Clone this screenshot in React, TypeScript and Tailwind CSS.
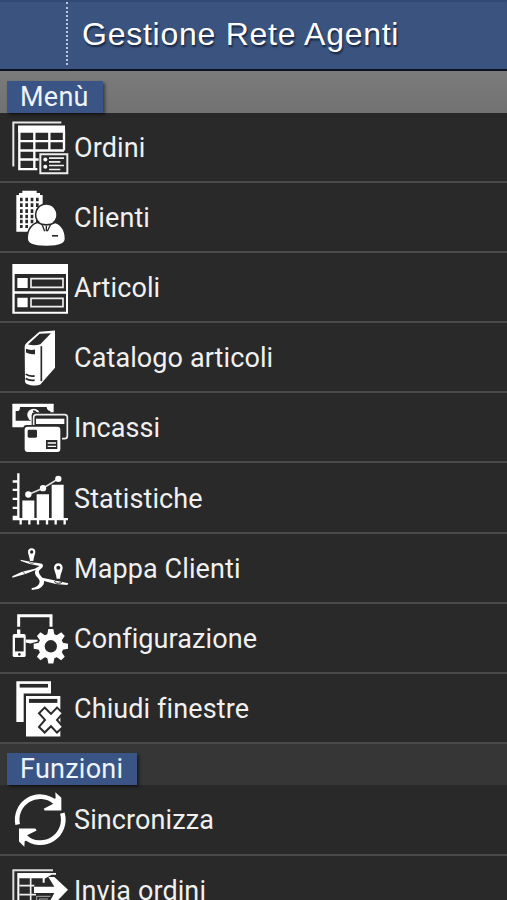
import type { ReactNode } from "react";

const DARK = "#292929";

function Icon({ top, children }: { top: number; children: ReactNode }) {
  return (
    <svg className="h-[68px] w-[74px] shrink-0" viewBox={`0 ${top} 222 204`} fill="#fff" aria-hidden="true">
      {children}
    </svg>
  );
}

const OrdersIcon = () => (
  <Icon top={7.5}>
    <path d="M40 168V36H184" fill="none" stroke="#e8e8e8" strokeWidth="6" />
    <path d="M54 45H195V67H54z" />
    <path d="M58 60V176H112M192 60V120M103 60V176M148 60V120M58 92H192M58 120H192M58 147H118" fill="none" stroke="#fff" strokeWidth="7" />
    <path d="M116 125H207V192H116z" fill={DARK} />
    <path d="M121 131H202V188H121z" fill="none" stroke="#eee" strokeWidth="6" />
    <circle cx="136" cy="147" r="6" />
    <circle cx="136" cy="169" r="6" />
    <path d="M147 143H192M147 154H181M147 165H192M147 177H181" stroke="#eee" strokeWidth="5" />
  </Icon>
);

const ClientsIcon = () => (
  <Icon top={8.1}>
    <path d="M49 154V44H57V38H67V31H110V38H120V44H128V154z" />
    {[52, 69, 87, 103, 118].map((y) => (
      <path key={y} d={`M60 ${y}h8v11h-8zM76 ${y}h8v11h-8zM92 ${y}h8v11h-8zM108 ${y}h8v11h-8z`} fill={DARK} />
    ))}
    <path d="M60 134h8v9h-8zM76 134h8v9h-8z" fill={DARK} />
    <path
      d="M139 73a30 30 0 0 1 19 53c22 6 36 21 36 49 0 12-13 21-55 21s-55-9-55-21c0-28 14-43 36-49a30 30 0 0 1 19-53z"
      stroke={DARK}
      strokeWidth="9"
      paintOrder="stroke"
    />
    <path d="M112 126Q139 142 166 126" fill="none" stroke={DARK} strokeWidth="5" />
    <path d="M126 132L134 153M152 132L142 153M139 137V153" stroke={DARK} strokeWidth="4" />
    <path d="M156 164H174V169H156z" fill={DARK} />
  </Icon>
);

const ArticlesIcon = () => (
  <Icon top={0}>
    <path d="M37 33H204V182H37z" />
    <path d="M44 63H198V115H44zM44 122H198V176H44z" fill={DARK} />
    <path d="M52 75H83V105H52zM52 134H83V163H52z" />
    <path d="M93 77H189V103H93zM93 136H189V161H93z" fill="none" stroke="#eee" strokeWidth="5" />
  </Icon>
);

const CatalogIcon = () => (
  <Icon top={212.5}>
    <path d="M74 283Q75 276 81 271L118 239L165 235V347L121 397Q111 402 92 399Q77 397 75 389z" />
    <path d="M84 277L119 245L153 243L121 276Q106 282 84 277z" fill={DARK} />
    <path d="M124 282V387" stroke={DARK} strokeWidth="5" />
    <path d="M78 290Q90 295 105 292V306Q90 308 78 301z" fill={DARK} />
    <path d="M77 366Q88 374 104 371M77 379Q89 387 104 384" fill="none" stroke={DARK} strokeWidth="5" />
  </Icon>
);

const ReceiptsIcon = () => (
  <Icon top={-2.1}>
    <rect x="37" y="30" width="124" height="71" rx="2" />
    <path d="M60 40H140Q141 51 151 52V81H47V77H54V52Q60 51 60 40zM47 52H54V78H47z" fill={DARK} />
    <circle cx="101" cy="64" r="19" />
    <path d="M99 52Q113 53 111 69" fill="none" stroke={DARK} strokeWidth="5" />
    <rect x="95" y="56" width="113" height="84" rx="9" fill={DARK} />
    <rect x="101" y="63" width="101" height="72" rx="8" fill="none" stroke="#eee" strokeWidth="5" />
    <path d="M108 75H193V91H108z" />
    <rect x="70" y="94" width="116" height="85" rx="10" fill={DARK} />
    <rect x="74" y="99" width="107" height="76" rx="9" />
    <rect x="83" y="108" width="28" height="24" rx="4" fill={DARK} />
    <path d="M138 139H172V166H138z" fill={DARK} />
    <path d="M143 148H168M143 158H168" stroke="#fff" strokeWidth="4" />
  </Icon>
);

const StatsIcon = () => (
  <Icon top={208.5}>
    <path
      d="M55 236V374M38 261H55M38 286H55M38 313H55M38 340H55M38 367H55M38 374H204M62 374V390M88 374V390M114 374V390M141 374V390M167 374V390M194 374V390"
      fill="none"
      stroke="#fff"
      strokeWidth="7"
    />
    <path d="M67 318H103V372H67zM110 299H147V372H110zM155 271H191V372H155z" />
    <path d="M85 300L129 281L175 253" fill="none" stroke="#ddd" strokeWidth="5" />
    <circle cx="85" cy="300" r="9.500" />
    <circle cx="129" cy="281" r="9.500" />
    <circle cx="175" cy="253" r="9.500" />
  </Icon>
);

const MapIcon = () => (
  <Icon top={-0.9}>
    <path d="M95 42a11 11 0 0 1 11 11c0 7-5 15-6 27h-10c-1-12-6-20-6-27a11 11 0 0 1 11-11z" />
    <circle cx="95" cy="53" r="5" fill={DARK} />
    <path d="M175 87a13 13 0 0 1 13 13c0 9-7 18-8 33h-10c-1-15-8-24-8-33a13 13 0 0 1 13-13z" />
    <circle cx="175" cy="100" r="6" fill={DARK} />
    <path d="M61 76L91 82L126 88Q131 92 128 98L117 109Q114 116 127 130L205 147L202 152L167 149L132 140Q135 154 115 164L95 167V162Q118 156 119 142Q119 136 109 126Q102 116 107 107L78 118L37 130V126L66 112L104 103L119 95L89 89L63 80z" />
    <ellipse cx="175" cy="142" rx="11" ry="5" fill="none" stroke={DARK} strokeWidth="3" />
    <ellipse cx="96" cy="84" rx="7" ry="3" fill="none" stroke={DARK} strokeWidth="2" />
    <path d="M67 111L75 118" stroke={DARK} strokeWidth="2" />
  </Icon>
);

const SettingsIcon = () => (
  <Icon top={-0.3}>
    <path d="M56 68V35H153V68" fill="none" stroke="#fff" strokeWidth="9" />
    <path d="M51 76H61V91H51z" />
    <rect x="38" y="90" width="39" height="69" rx="5" />
    <path d="M45 101H71V142H45z" fill={DARK} />
    <circle cx="58" cy="151" r="4" fill={DARK} />
    <path d="M77 106L113 107V112L91 118L77 115z" />
    {[0, 45, 90, 135, 180, 225, 270, 315].map((a) => (
      <path key={a} d="M141 96L145 75H160L164 96z" transform={`rotate(${a} 152.500 126.500)`} />
    ))}
    <circle cx="152.500" cy="126.500" r="28" fill="none" stroke="#fff" strokeWidth="19" />
  </Icon>
);

const CloseIcon = () => (
  <Icon top={210.3}>
    <path d="M49 232H153V269H71V354H49z" />
    <path d="M59 240H144V251H59z" fill={DARK} />
    <path d="M78 276H181V398H78z" />
    <path d="M87 285H172V297H87z" fill={DARK} />
    <path
      d="M134 311L153 330L171 311L189 328L171 348L189 369L171 386L153 367L134 386L117 369L135 348L117 328z"
      stroke={DARK}
      strokeWidth="6"
    />
  </Icon>
);

const SyncIcon = () => (
  <Icon top={137.5}>
    <path d="M53 256A69 69 0 0 1 164 188M187 222A69 69 0 0 1 76 294" fill="none" stroke="#fff" strokeWidth="14" />
    <path d="M166 159L184 176V214H134L131 209L160 194L150 184L167 177z" />
    <path d="M73 323L57 307V268H106L110 274L81 288L91 297L74 306z" />
  </Icon>
);

const SendIcon = () => (
  <Icon top={348}>
    <path d="M40 495V391H159" fill="none" stroke="#ddd" strokeWidth="6" />
    <path d="M52 399H168V404H155L134 416V428H128V415H58V495H52z" />
    <path d="M92 412V495M58 437H103M58 464H108" fill="none" stroke="#eee" strokeWidth="5" />
    <path d="M110 495V469H151M118 495V477H144M124 483H148" fill="none" stroke="#aaa" strokeWidth="3" />
    <path d="M102 440H163L145 411H163L204 449L163 492H145L163 459H102z" />
  </Icon>
);

function Row({ icon, label }: { icon: ReactNode; label: string }) {
  return (
    <li className="flex h-[70.2px] items-center border-b-2 border-[#4b4b4b] bg-[#292929] text-[27px] text-[#f0f0f0]">
      {icon}
      <span className="whitespace-nowrap pt-[2px] leading-8 tracking-[0.1px]">{label}</span>
    </li>
  );
}

function SectionLabel({ children, className }: { children: ReactNode; className: string }) {
  return (
    <h2
      className={`flex h-8 items-center bg-[#3a5485] pl-[13px] text-[27px] leading-8 tracking-[0.25px] text-[#eef4fb] shadow-[2px_2px_3px_rgba(0,0,0,0.5)] ${className}`}
    >
      {children}
    </h2>
  );
}

export default function App() {
  return (
    <main className="h-[900px] w-[507px] overflow-hidden bg-[#292929] font-['Roboto',sans-serif]">
      <header className="flex h-[71px] items-start border-b-2 border-[#0c1221] bg-[#3b547f] shadow-[inset_0_2px_1px_#324a78]">
        <div className="mt-0.5 h-[63px] w-[68px] border-r-2 border-dotted border-[#b9c6dc]" />
        <h1 className="ml-[14px] mt-[14px] whitespace-nowrap font-['Liberation_Sans',sans-serif] text-[32px] leading-10 tracking-[0.74px] text-white [text-shadow:1px_2px_2px_rgba(10,20,45,0.8)]">
          Gestione Rete Agenti
        </h1>
      </header>
      <div className="flex h-[41.5px] items-end bg-linear-to-b from-[#7b7b7b] to-[#727272] pl-[7px]">
        <SectionLabel className="w-[96px]">Menù</SectionLabel>
      </div>
      <ul>
        <Row icon={<OrdersIcon />} label="Ordini" />
        <Row icon={<ClientsIcon />} label="Clienti" />
        <Row icon={<ArticlesIcon />} label="Articoli" />
        <Row icon={<CatalogIcon />} label="Catalogo articoli" />
        <Row icon={<ReceiptsIcon />} label="Incassi" />
        <Row icon={<StatsIcon />} label="Statistiche" />
        <Row icon={<MapIcon />} label="Mappa Clienti" />
        <Row icon={<SettingsIcon />} label="Configurazione" />
        <Row icon={<CloseIcon />} label="Chiudi finestre" />
      </ul>
      <div className="flex h-[41.2px] items-end bg-[#363636] pl-[7px]">
        <SectionLabel className="w-[130px]">Funzioni</SectionLabel>
      </div>
      <ul>
        <Row icon={<SyncIcon />} label="Sincronizza" />
        <Row icon={<SendIcon />} label="Invia ordini" />
      </ul>
    </main>
  );
}
